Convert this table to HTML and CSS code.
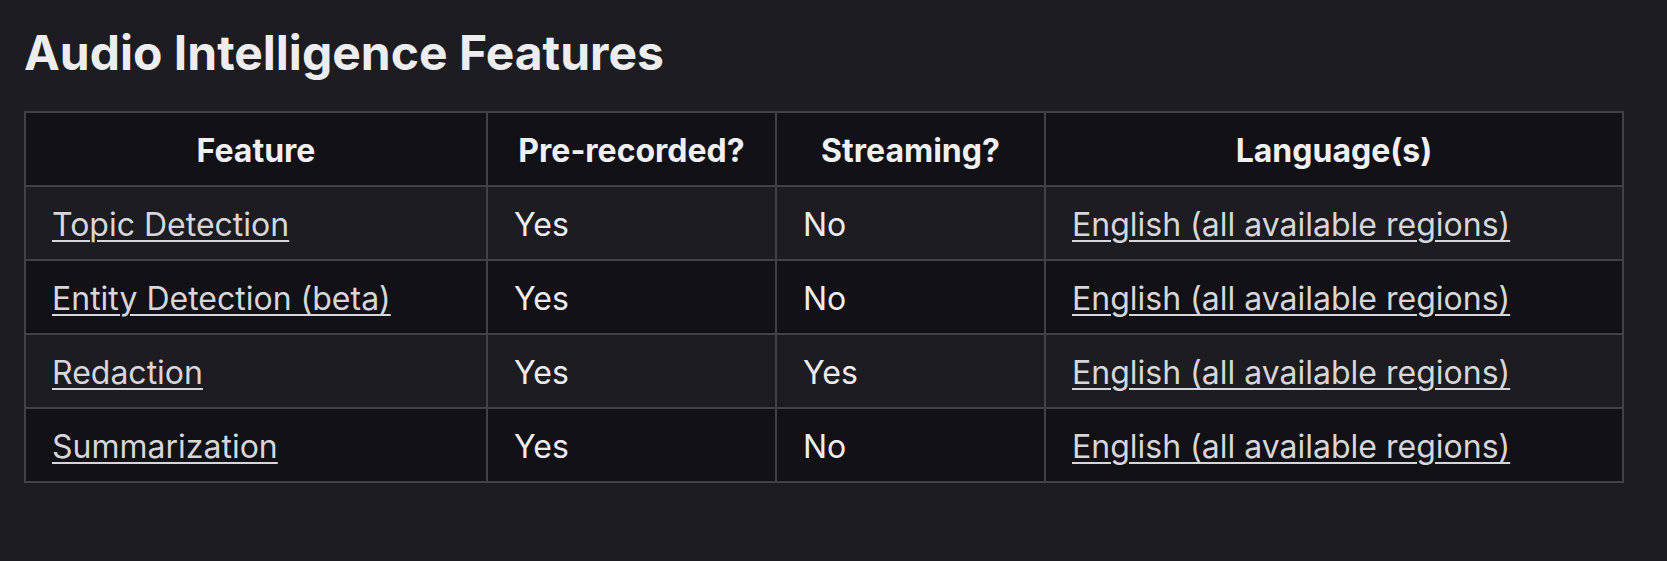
FILE: index.html
```html
<!DOCTYPE html>
<html lang="en">
<head>
<meta charset="utf-8">
<title>Audio Intelligence Features</title>
<link rel="stylesheet" href="styles.css">
</head>
<body>
<main class="page">
  <h2 class="title">Audio Intelligence Features</h2>
  <table class="features">
    <colgroup>
      <col class="c1"><col class="c2"><col class="c3"><col class="c4">
    </colgroup>
    <thead>
      <tr><th>Feature</th><th>Pre-recorded?</th><th>Streaming?</th><th>Language(s)</th></tr>
    </thead>
    <tbody>
      <tr><td><a href="#">Topic Detection</a></td><td>Yes</td><td>No</td><td><a href="#">English (all available regions)</a></td></tr>
      <tr><td><a href="#">Entity Detection (beta)</a></td><td>Yes</td><td>No</td><td><a href="#">English (all available regions)</a></td></tr>
      <tr><td><a href="#">Redaction</a></td><td>Yes</td><td>Yes</td><td><a href="#">English (all available regions)</a></td></tr>
      <tr><td><a href="#">Summarization</a></td><td>Yes</td><td>No</td><td><a href="#">English (all available regions)</a></td></tr>
    </tbody>
  </table>
</main>
</body>
</html>
```
FILE: styles.css
```css
html, body {
  margin: 0;
  padding: 0;
  background: #1c1c21;
}
body {
  font-family: Inter, "Noto Sans", sans-serif;
  color: #ededf0;
}
.page {
  padding: 24px 24px 0 24px;
}
.title {
  margin: 0 0 29px 0;
  font-size: 48px;
  line-height: 58px;
  font-weight: 700;
  color: #ededf0;
}
.features {
  border-collapse: collapse;
  width: 1598px;
  table-layout: fixed;
  font-size: 32px;
  line-height: 40px;
}
.c1 { width: 462px; }
.c2 { width: 289px; }
.c3 { width: 269px; }
.c4 { width: 578px; }
.features th,
.features td {
  border: 2px solid #414147;
  padding: 18px 26px 14px 26px;
  text-align: left;
  white-space: nowrap;
}
.features th {
  text-align: center;
  font-weight: 700;
  color: #f0f0f3;
  background: #111116;
}
.features td {
  font-weight: 370;
  color: #ededf0;
}
.features tbody tr:nth-child(odd) td { background: #1c1c21; }
.features tbody tr:nth-child(even) td { background: #111116; }
.features a {
  color: #d6d6db;
  text-decoration: underline;
  text-underline-offset: 4px;
  text-decoration-thickness: 2px;
}
```
